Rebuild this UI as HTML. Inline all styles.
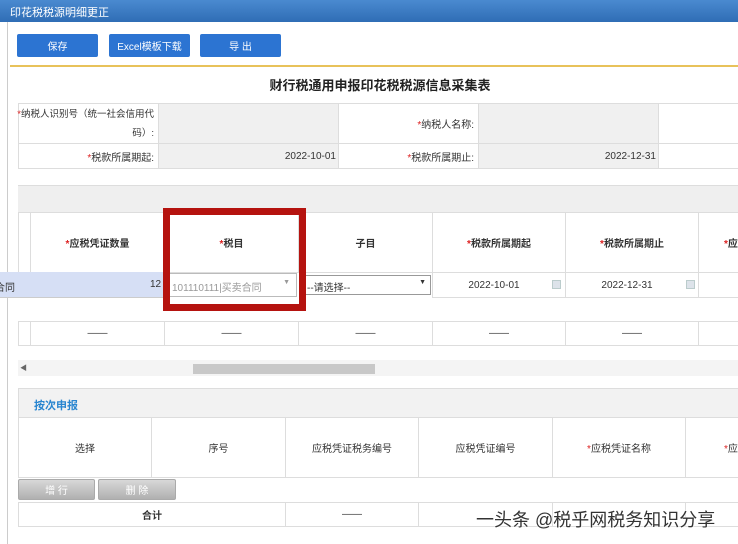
<!DOCTYPE html>
<html><head><meta charset="utf-8"><style>
*{margin:0;padding:0;box-sizing:border-box}
body{width:738px;height:544px;overflow:hidden;background:#fff;position:relative;font-family:"Liberation Sans","Noto Sans CJK SC",sans-serif;font-size:10px;color:#333}
.a{position:absolute}
.t{display:flex;align-items:center;justify-content:center}
.btn{position:absolute;top:34px;height:23px;width:81px;background:#2c74d2;border-radius:2px;color:#fff;font-size:10px;display:flex;align-items:center;justify-content:center}
.r{color:#d22;}
.cell{position:absolute;border:1px solid #ddd;display:flex;align-items:center;justify-content:center;font-size:10px}
.gb{background:#f0f0f0}
</style></head><body>
<div class="a" style="left:0;top:0;width:738px;height:22px;background:linear-gradient(#4a8ad0,#2f6db5);color:#fff;font-size:11px;padding:4px 10px">印花税税源明细更正</div>
<div class="a" style="left:7px;top:22px;width:1px;height:522px;background:#ccc"></div>
<div class="btn" style="left:17px">保存</div>
<div class="btn" style="left:109px">Excel模板下载</div>
<div class="btn" style="left:200px">导 出</div>
<div class="a" style="left:10px;top:65px;width:728px;height:2px;background:#e8c25a"></div>
<div class="a" style="left:0;top:75px;width:760px;text-align:center;font-size:13px;font-weight:bold;color:#222">财行税通用申报印花税税源信息采集表</div>
<div class="cell" style="left:18px;top:103px;width:141px;height:41px;justify-content:flex-end;text-align:right;padding-right:4px;line-height:19px;font-size:9.5px;white-space:nowrap"><span><span class="r">*</span>纳税人识别号（统一社会信用代<br>码）:</span></div>
<div class="cell gb" style="left:158px;top:103px;width:181px;height:41px"></div>
<div class="cell" style="left:338px;top:103px;width:141px;height:41px;justify-content:flex-end;padding-right:4px"><span><span class="r">*</span>纳税人名称:</span></div>
<div class="cell gb" style="left:478px;top:103px;width:181px;height:41px"></div>
<div class="cell" style="left:658px;top:103px;width:90px;height:41px"></div>
<div class="cell" style="left:18px;top:143px;width:141px;height:26px;justify-content:flex-end;padding-right:4px"><span><span class="r">*</span>税款所属期起:</span></div>
<div class="cell gb" style="left:158px;top:143px;width:181px;height:26px;justify-content:flex-end;padding-right:2px">2022-10-01</div>
<div class="cell" style="left:338px;top:143px;width:141px;height:26px;justify-content:flex-end;padding-right:4px"><span><span class="r">*</span>税款所属期止:</span></div>
<div class="cell gb" style="left:478px;top:143px;width:181px;height:26px;justify-content:flex-end;padding-right:2px">2022-12-31</div>
<div class="cell" style="left:658px;top:143px;width:90px;height:26px"></div>
<div class="a" style="left:18px;top:185px;width:730px;height:28px;background:#efefef;border-top:1px solid #ddd"></div>
<div class="cell" style="left:18px;top:212px;width:13px;height:61px"></div>
<div class="cell" style="left:30px;top:212px;width:135px;height:61px;font-weight:bold"><span><span class="r">*</span>应税凭证数量</span></div>
<div class="cell" style="left:164px;top:212px;width:135px;height:61px;font-weight:bold"><span><span class="r">*</span>税目</span></div>
<div class="cell" style="left:298px;top:212px;width:135px;height:61px;font-weight:bold">子目</div>
<div class="cell" style="left:432px;top:212px;width:134px;height:61px;font-weight:bold"><span><span class="r">*</span>税款所属期起</span></div>
<div class="cell" style="left:565px;top:212px;width:134px;height:61px;font-weight:bold"><span><span class="r">*</span>税款所属期止</span></div>
<div class="cell" style="left:698px;top:212px;width:60px;height:61px;font-weight:bold;justify-content:flex-start;padding-left:25px"><span><span class="r">*</span>应</span></div>
<div class="a" style="left:0;top:272px;width:165px;height:26px;background:#d6dff5;border-bottom:1px solid #ccc;overflow:hidden"><div class="a" style="left:-5px;top:7px">合同</div></div>
<div class="a" style="left:150px;top:279px">12</div>
<div class="a" style="left:167px;top:273px;width:130px;height:24px;border:1px solid #bbb;background:#fff;color:#999;font-size:10px;padding:5px 4px">101110111|买卖合同<span style="position:absolute;right:6px;font-size:7px">▼</span></div>
<div class="a" style="left:304px;top:275px;width:127px;height:20px;border:1px solid #999;background:#fff;padding:3px 2px">--请选择--<span style="position:absolute;right:4px;font-size:7px">▼</span></div>
<div class="cell" style="left:432px;top:272px;width:134px;height:26px;padding-right:10px">2022-10-01</div>
<div class="a" style="left:552px;top:280px;width:9px;height:9px;background:#dde3ea;border:1px solid #bcc"></div>
<div class="cell" style="left:565px;top:272px;width:134px;height:26px;padding-right:10px">2022-12-31</div>
<div class="a" style="left:686px;top:280px;width:9px;height:9px;background:#dde3ea;border:1px solid #bcc"></div>
<div class="cell" style="left:698px;top:272px;width:60px;height:26px"></div>
<div class="cell" style="left:18px;top:321px;width:13px;height:25px"></div>
<div class="cell" style="left:30px;top:321px;width:135px;height:25px">——</div>
<div class="cell" style="left:164px;top:321px;width:135px;height:25px">——</div>
<div class="cell" style="left:298px;top:321px;width:135px;height:25px">——</div>
<div class="cell" style="left:432px;top:321px;width:134px;height:25px">——</div>
<div class="cell" style="left:565px;top:321px;width:134px;height:25px">——</div>
<div class="cell" style="left:698px;top:321px;width:60px;height:25px"></div>
<div class="a" style="left:163px;top:208px;width:143px;height:103px;border:7px solid #b5130f"></div>
<div class="a" style="left:18px;top:360px;width:720px;height:16px;background:#f4f4f4"></div>
<div class="a" style="left:20px;top:363px;font-size:7px;color:#666">◀</div>
<div class="a" style="left:193px;top:364px;width:182px;height:10px;background:#c8c8c8"></div>
<div class="a" style="left:18px;top:388px;width:730px;height:30px;background:#f2f2f2;border:1px solid #ddd;color:#2a86d0;font-size:11px;font-weight:bold;padding:8px 15px">按次申报</div>
<div class="cell" style="left:18px;top:417px;width:134px;height:61px">选择</div>
<div class="cell" style="left:151px;top:417px;width:135px;height:61px">序号</div>
<div class="cell" style="left:285px;top:417px;width:134px;height:61px">应税凭证税务编号</div>
<div class="cell" style="left:418px;top:417px;width:135px;height:61px">应税凭证编号</div>
<div class="cell" style="left:552px;top:417px;width:134px;height:61px"><span><span class="r">*</span>应税凭证名称</span></div>
<div class="cell" style="left:685px;top:417px;width:70px;height:61px;justify-content:flex-start;padding-left:38px"><span><span class="r">*</span>应</span></div>
<div class="a t" style="left:18px;top:479px;width:77px;height:21px;background:linear-gradient(#d8d8d8,#b0b0b0);border:1px solid #aaa;border-radius:2px;color:#fff">增 行</div>
<div class="a t" style="left:98px;top:479px;width:78px;height:21px;background:linear-gradient(#d8d8d8,#b0b0b0);border:1px solid #aaa;border-radius:2px;color:#fff">删 除</div>
<div class="cell" style="left:18px;top:502px;width:268px;height:25px;font-weight:bold">合计</div>
<div class="cell" style="left:285px;top:502px;width:134px;height:25px">——</div>
<div class="cell" style="left:418px;top:502px;width:135px;height:25px"></div>
<div class="cell" style="left:552px;top:502px;width:134px;height:25px"></div>
<div class="cell" style="left:685px;top:502px;width:70px;height:25px"></div>
<div class="a" style="left:476px;top:506px;font-size:18px;color:#333;text-shadow:0 0 2px #fff,0 0 2px #fff">一头条 @税乎网税务知识分享</div>
</body></html>
